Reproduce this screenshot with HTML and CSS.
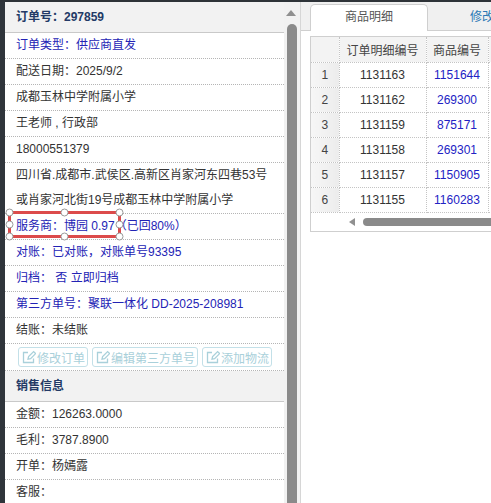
FILE: index.html
```html
<!DOCTYPE html>
<html lang="zh">
<head>
<meta charset="utf-8">
<title>订单</title>
<link rel="stylesheet" href="styles.css">
</head>
<body>
<div class="app">
  <div class="strip"></div>
  <div class="left">
    <div class="hd">订单号：297859</div>
    <div class="row blue">订单类型：供应商直发</div>
    <div class="row">配送日期：2025/9/2</div>
    <div class="row">成都玉林中学附属小学</div>
    <div class="row">王老师 , 行政部</div>
    <div class="row">18000551379</div>
    <div class="row">四川省.成都市.武侯区.高新区肖家河东四巷53号<br>或肖家河北街19号成都玉林中学附属小学</div>
    <div class="row blue">服务商：博园 0.97（已回80%）</div>
    <div class="row blue">对账：已对账，对账单号93395</div>
    <div class="row blue">归档：&nbsp;否 立即归档</div>
    <div class="row blue">第三方单号：聚联一体化 DD-2025-208981</div>
    <div class="row">结账：未结账</div>
    <div class="btnrow">
      <span class="btn"><svg class="ico" viewBox="0 0 14 14"><path d="M11.5 8.5v4h-10v-10h4.5" /><path d="M6 9.2l.6-2.6 5-5 2 2-5 5z" /></svg>修改订单</span>
      <span class="btn"><svg class="ico" viewBox="0 0 14 14"><path d="M11.5 8.5v4h-10v-10h4.5" /><path d="M6 9.2l.6-2.6 5-5 2 2-5 5z" /></svg>编辑第三方单号</span>
      <span class="btn"><svg class="ico" viewBox="0 0 14 14"><path d="M11.5 8.5v4h-10v-10h4.5" /><path d="M6 9.2l.6-2.6 5-5 2 2-5 5z" /></svg>添加物流</span>
    </div>
    <div class="hd">销售信息</div>
    <div class="row">金额：126263.0000</div>
    <div class="row">毛利：3787.8900</div>
    <div class="row">开单：杨嫣露</div>
    <div class="row">客服：</div>
    <svg class="sel" width="125" height="37" viewBox="0 0 125 37">
      <rect x="4.5" y="5.5" width="110" height="24" fill="none" stroke="#dc4b4b" stroke-width="3"/>
      <g fill="#fff" stroke="#9a9a9a" stroke-width="1">
        <circle cx="4.5" cy="5.5" r="3.5"/><circle cx="59.5" cy="5.5" r="3.5"/><circle cx="114.5" cy="5.5" r="3.5"/>
        <circle cx="4.5" cy="17.5" r="3.5"/><circle cx="114.5" cy="17.5" r="3.5"/>
        <circle cx="4.5" cy="29.5" r="3.5"/><circle cx="59.5" cy="29.5" r="3.5"/><circle cx="114.5" cy="29.5" r="3.5"/>
      </g>
    </svg>
  </div>
  <div class="vscroll">
    <div class="uparrow"></div>
    <div class="thumb"></div>
  </div>
  <div class="right">
    <div class="tabs">
      <div class="tab active">商品明细</div>
      <div class="tab link">修改</div>
    </div>
    <div class="grid">
      <table>
        <colgroup><col class="c0"><col class="c1"><col class="c2"><col class="c3"></colgroup>
        <thead>
          <tr><th class="num"></th><th>订单明细编号</th><th>商品编号</th><th></th></tr>
        </thead>
        <tbody>
          <tr><td class="num">1</td><td>1131163</td><td class="b">1151644</td><td></td></tr>
          <tr><td class="num">2</td><td>1131162</td><td class="b">269300</td><td></td></tr>
          <tr><td class="num">3</td><td>1131159</td><td class="b">875171</td><td></td></tr>
          <tr><td class="num">4</td><td>1131158</td><td class="b">269301</td><td></td></tr>
          <tr><td class="num">5</td><td>1131157</td><td class="b">1150905</td><td></td></tr>
          <tr><td class="num">6</td><td>1131155</td><td class="b">1160283</td><td></td></tr>
        </tbody>
      </table>
      <div class="hscroll">
        <div class="larrow"></div>
        <div class="hthumb"></div>
      </div>
    </div>
  </div>
</div>
</body>
</html>
```
FILE: styles.css
```css
html, body {
  margin: 0;
  padding: 0;
  background: #fff;
  overflow: hidden;
}
body {
  font-family: "Liberation Sans", "Noto Sans CJK SC", sans-serif;
  font-size: 12px;
  color: #333;
}
.app {
  display: flex;
  width: 491px;
  height: 503px;
  border-top: 2px solid #2e3338;
  box-sizing: border-box;
  overflow: hidden;
}
.strip {
  width: 5px;
  flex: none;
  background: #2f353b;
}
.left {
  position: relative;
  width: 279px;
  flex: none;
  background: #fff;
  overflow: hidden;
}
.hd {
  height: 30px;
  line-height: 30px;
  padding-left: 11px;
  background: #f2f2f2;
  border-bottom: 1px solid #c9c9c9;
  font-weight: bold;
  color: #233a66;
  white-space: nowrap;
}
.row {
  line-height: 25px;
  padding-left: 11px;
  border-bottom: 1px dotted #b5b5b5;
  white-space: nowrap;
}
.blue {
  color: #2323b5;
}
.btnrow {
  display: flex;
  gap: 4px;
  padding: 3px 0 3px 13px;
  border-bottom: 1px dotted #b5b5b5;
}
.btn {
  display: flex;
  align-items: center;
  height: 18px;
  padding: 0 2px 0 3px;
  border: 1px solid #c3e0e8;
  border-radius: 3px;
  color: #a9d0da;
  white-space: nowrap;
}
.ico {
  width: 14px;
  height: 14px;
  margin-right: 1px;
  fill: none;
  stroke: #a9d0da;
  stroke-width: 1.3;
}
.sel {
  position: absolute;
  left: 0;
  top: 205px;
}
.vscroll {
  width: 16px;
  flex: none;
  background: #f1f1f1;
  display: flex;
  flex-direction: column;
}
.uparrow {
  margin: 8px 0 0 2px;
  width: 0;
  height: 0;
  border-left: 5px solid transparent;
  border-right: 5px solid transparent;
  border-bottom: 6px solid #8f8f8f;
}
.thumb {
  margin: 8px 0 0 3px;
  width: 10px;
  flex: 1;
  background: #8a8a8a;
  border-radius: 5px 5px 0 0;
}
.right {
  flex: 1;
  min-width: 0;
  border-left: 1px solid #d6d6d6;
  background: #fff;
  overflow: hidden;
}
.tabs {
  display: flex;
  align-items: flex-end;
  height: 28px;
  padding-left: 9px;
  background: #f0f0f0;
  border-bottom: 1px solid #cfcfcf;
}
.tab {
  flex: none;
  height: 25px;
  line-height: 25px;
  text-align: center;
  white-space: nowrap;
}
.tab.active {
  width: 116px;
  background: #fff;
  border: 1px solid #cfcfcf;
  border-bottom: none;
  border-radius: 5px 5px 0 0;
  color: #555;
  margin-bottom: -1px;
  height: 26px;
}
.tab.link {
  padding-left: 42px;
  text-align: left;
  color: #2a78b5;
}
.grid {
  margin: 5px 0 0 9px;
  width: 260px;
  border: 1px solid #cfcfcf;
  border-right: none;
}
table {
  border-collapse: collapse;
  table-layout: fixed;
  width: 260px;
}
.c0 { width: 28px; }
.c1 { width: 87px; }
.c2 { width: 62px; }
.c3 { width: 83px; }
th, td {
  height: 24px;
  padding: 0;
  text-align: center;
  font-weight: normal;
  border-right: 1px dotted #c4c4c4;
  border-bottom: 1px dotted #c4c4c4;
  white-space: nowrap;
  overflow: hidden;
}
th {
  height: 25px;
  background: #f3f3f3;
  color: #444;
}
td.num {
  background: linear-gradient(to right, #f6f6f6, #ececec);
  color: #444;
}
td.b {
  color: #2222c4;
}
.hscroll {
  display: flex;
  align-items: center;
  height: 18px;
}
.larrow {
  margin-left: 38px;
  width: 0;
  height: 0;
  border-top: 4px solid transparent;
  border-bottom: 4px solid transparent;
  border-right: 6px solid #909090;
}
.hthumb {
  margin-left: 8px;
  flex: 1;
  height: 8px;
  background: #8a8a8a;
  border-radius: 4px 0 0 4px;
}
```
